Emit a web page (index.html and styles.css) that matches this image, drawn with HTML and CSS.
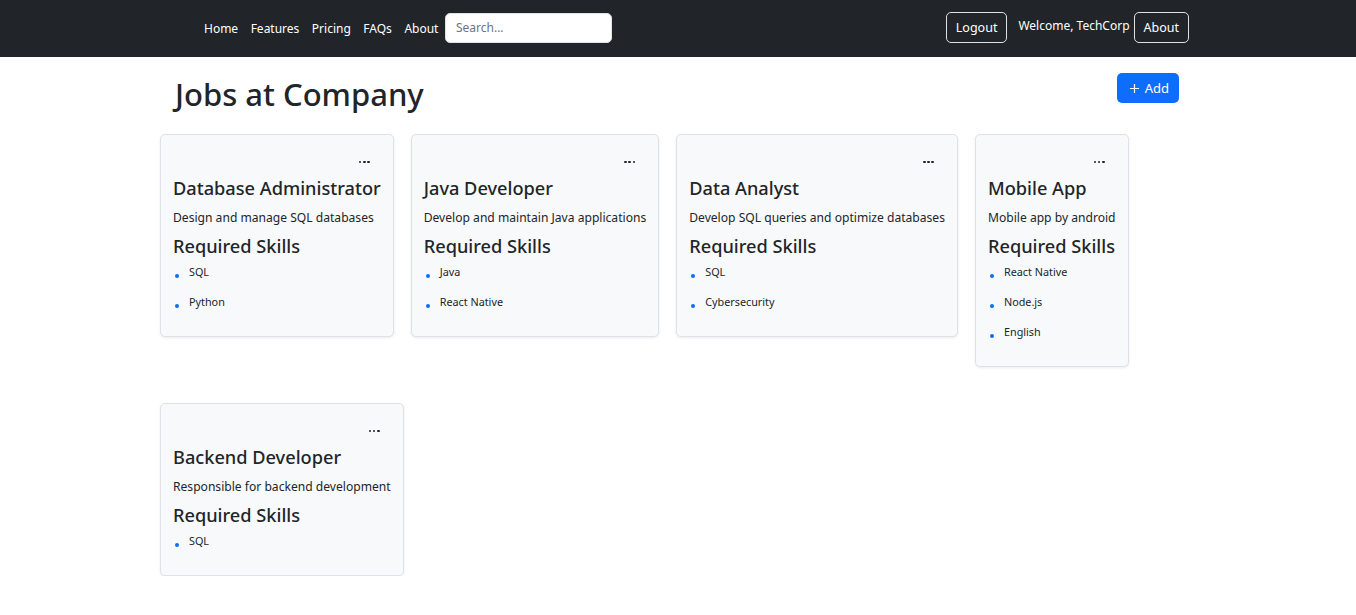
FILE: index.html
```html
<!DOCTYPE html>
<html lang="en">
<head>
<meta charset="utf-8">
<title>Jobs at Company</title>
<link rel="stylesheet" href="styles.css">
</head>
<body>
<nav class="navbar">
  <div class="nav-left">
    <a class="nav-link" href="#">Home</a>
    <a class="nav-link" href="#">Features</a>
    <a class="nav-link" href="#">Pricing</a>
    <a class="nav-link" href="#">FAQs</a>
    <a class="nav-link" href="#">About</a>
    <input class="search" type="text" placeholder="Search...">
  </div>
  <div class="nav-right">
    <button class="btn-outline">Logout</button>
    <span class="welcome">Welcome, TechCorp</span>
    <button class="btn-outline about">About</button>
  </div>
</nav>

<main class="page">
  <div class="page-header">
    <h2 class="page-title">Jobs at Company</h2>
    <button class="btn-add"><svg class="plus" viewBox="0 0 12 12" width="11" height="11"><path d="M6 1v10M1 6h10" stroke="#fff" stroke-width="1.3" fill="none"/></svg>Add</button>
  </div>

  <div class="cards">
    <div class="card">
      <div class="card-top"><span class="dots"><i></i><i></i><i></i></span></div>
      <h5 class="card-title">Database Administrator</h5>
      <p class="card-desc">Design and manage SQL databases</p>
      <h5 class="skills-title">Required Skills</h5>
      <ul class="skills">
        <li>SQL</li>
        <li>Python</li>
      </ul>
    </div>
    <div class="card">
      <div class="card-top"><span class="dots"><i></i><i></i><i></i></span></div>
      <h5 class="card-title">Java Developer</h5>
      <p class="card-desc">Develop and maintain Java applications</p>
      <h5 class="skills-title">Required Skills</h5>
      <ul class="skills">
        <li>Java</li>
        <li>React Native</li>
      </ul>
    </div>
    <div class="card">
      <div class="card-top"><span class="dots"><i></i><i></i><i></i></span></div>
      <h5 class="card-title">Data Analyst</h5>
      <p class="card-desc">Develop SQL queries and optimize databases</p>
      <h5 class="skills-title">Required Skills</h5>
      <ul class="skills">
        <li>SQL</li>
        <li>Cybersecurity</li>
      </ul>
    </div>
    <div class="card">
      <div class="card-top"><span class="dots"><i></i><i></i><i></i></span></div>
      <h5 class="card-title">Mobile App</h5>
      <p class="card-desc">Mobile app by android</p>
      <h5 class="skills-title">Required Skills</h5>
      <ul class="skills">
        <li>React Native</li>
        <li>Node.js</li>
        <li>English</li>
      </ul>
    </div>
    <div class="card">
      <div class="card-top"><span class="dots"><i></i><i></i><i></i></span></div>
      <h5 class="card-title">Backend Developer</h5>
      <p class="card-desc">Responsible for backend development</p>
      <h5 class="skills-title">Required Skills</h5>
      <ul class="skills">
        <li>SQL</li>
      </ul>
    </div>
  </div>
</main>
</body>
</html>
```

FILE: styles.css
```css
* { box-sizing: border-box; }

body {
  margin: 0;
  font-family: "Noto Sans", "Open Sans", sans-serif;
  color: #212529;
  background: #fff;
}

.navbar {
  height: 57px;
  background: #212529;
  display: flex;
  align-items: center;
  justify-content: space-between;
  padding: 0 167px 2px 204px;
}

.nav-left, .nav-right {
  display: flex;
  align-items: center;
}

.nav-left { gap: 12.5px; }

.nav-link {
  color: #fff;
  text-decoration: none;
  font-size: 12px;
  margin-top: 2px;
}

.search {
  margin-left: -6px;
  width: 167px;
  height: 30px;
  border: 1px solid #dee2e6;
  border-radius: 5px;
  padding: 0 10px;
  font-family: inherit;
  font-size: 12px;
  color: #212529;
  background: #fff;
}
.search::placeholder { color: #6c757d; }

.btn-outline {
  height: 31px;
  padding: 0 9px;
  background: transparent;
  border: 1px solid #dee2e6;
  border-radius: 5px;
  color: #fff;
  font-family: inherit;
  font-size: 12.5px;
}

.welcome {
  color: #fff;
  font-size: 12px;
  margin: 0 4px 4px 11px;
}

.page {
  width: 1020px;
  margin-left: 160px;
}

.page-header {
  display: flex;
  justify-content: space-between;
  align-items: flex-start;
  padding: 16px 0 0 15px;
  height: 77px;
}

.page-title {
  margin: 3px 0 0;
  font-size: 31px;
  font-weight: 500;
  line-height: 1.2;
}

.btn-add {
  display: flex;
  align-items: center;
  gap: 5px;
  height: 30px;
  margin-right: 1px;
  padding: 0 10px 0 12px;
  background: #0d6efd;
  border: none;
  border-radius: 5px;
  color: #fff;
  font-family: inherit;
  font-size: 13px;
}

.cards {
  display: flex;
  flex-wrap: wrap;
  align-items: flex-start;
  column-gap: 17px;
  row-gap: 36px;
}

.card {
  background: #f8f9fa;
  border: 1px solid #dee2e6;
  border-radius: 5px;
  box-shadow: 0 1px 3px rgba(0, 0, 0, 0.08);
  padding: 15px 12px 13px;
}

.card-top {
  height: 24px;
  display: flex;
  justify-content: flex-end;
  align-items: center;
  padding-right: 11px;
}

.dots {
  display: flex;
  gap: 1.6px;
}
.dots i {
  width: 2.6px;
  height: 2.6px;
  border-radius: 50%;
  background: #212529;
}

.card-title, .skills-title {
  margin: 2px 0 0;
  font-size: 18.2px;
  font-weight: 500;
  line-height: 24px;
}

.card-desc {
  margin: 7px 0 0;
  font-size: 12.1px;
  line-height: 21px;
}

.skills-title { margin-top: 6px; }

.skills {
  list-style: none;
  margin: 5px 0 0;
  padding: 0;
}

.skills li {
  display: flex;
  align-items: flex-start;
  font-size: 10.8px;
  line-height: 18px;
  margin-bottom: 12px;
}

.skills li::before {
  content: "";
  width: 4px;
  height: 4px;
  border-radius: 50%;
  background: #0d6efd;
  margin: 11px 10px 0 2px;
  flex: none;
}
```
